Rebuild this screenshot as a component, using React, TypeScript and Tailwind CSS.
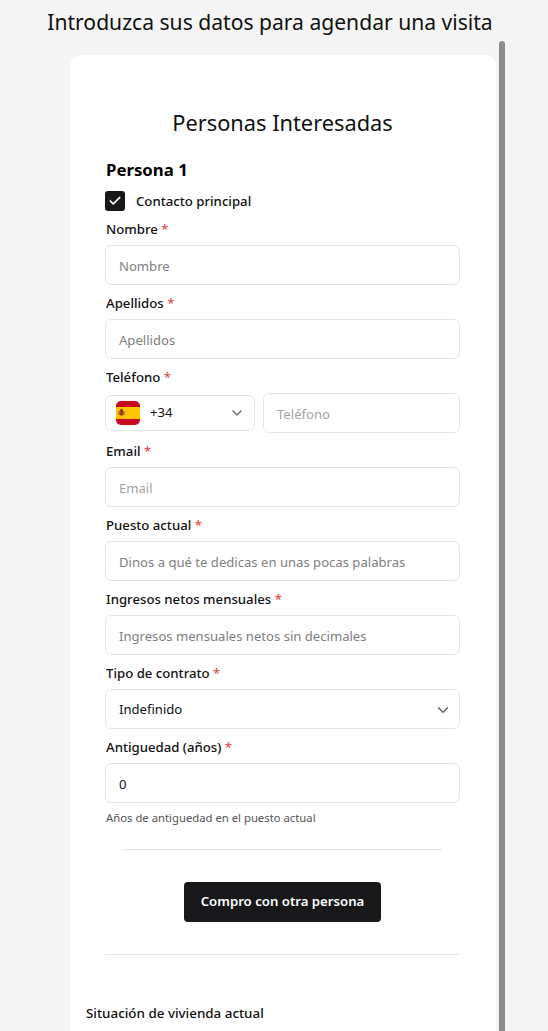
import { ChevronDown, Check } from 'lucide-react';

const fontStack = 'font-["Noto_Sans",sans-serif]';

function Label({ text }: { text: string }) {
  return (
    <label className="block h-5 pl-px text-[13.2px] leading-5 font-medium text-[#111]">
      {text} <span className="text-[#e5484d]">*</span>
    </label>
  );
}

function Field({ label, placeholder, light }: { label: string; placeholder: string; light?: boolean }) {
  return (
    <div className="mb-2">
      <Label text={label} />
      <input
        placeholder={placeholder}
        className={`mt-1.5 block h-10 w-full rounded-md border border-[#e5e5e5] bg-white px-[13px] pt-[2px] text-[13.1px] outline-none ${
          light ? 'placeholder:text-[#a3a3a3]' : 'placeholder:text-[#808080]'
        }`}
      />
    </div>
  );
}

function SpainFlag() {
  return (
    <svg width="24" height="24" viewBox="0 0 24 24" className="shrink-0">
      <rect width="24" height="24" rx="5" fill="#c60b1e" />
      <rect y="6" width="24" height="12" fill="#ffc400" />
      <rect x="3.5" y="9.5" width="4" height="5" rx="1" fill="#a3372a" />
      <circle cx="5.5" cy="9" r="1.2" fill="#7a2a1c" />
      <rect x="2.5" y="10" width="1" height="4" fill="#8a6a3a" />
      <rect x="7.5" y="10" width="1" height="4" fill="#8a6a3a" />
    </svg>
  );
}

export default function App() {
  return (
    <div className={`h-screen overflow-hidden bg-[#f5f5f5] ${fontStack}`}>
      <h1 className="h-[41px] pt-[3px] pr-2 text-center text-[21.1px] leading-[38px] text-[#111]">
        Introduzca sus datos para agendar una visita
      </h1>
      <div className="flex items-start pl-[70px]">
        <div className="mt-3.5 w-[426px] rounded-t-xl bg-white px-4 pt-[52px]">
          <div className="mr-1 ml-[3px] px-4">
            <h2 className="text-center text-[21.8px] leading-8 text-[#111]">Personas Interesadas</h2>
            <h3 className="mt-[19px] pl-px text-[16.8px] leading-6 font-bold text-black">Persona 1</h3>
            <div className="mt-[9px] flex h-5 items-center gap-[11px]">
              <span className="flex size-5 items-center justify-center rounded-[3px] bg-[#18181b]">
                <Check size={14} strokeWidth={3} className="text-white" />
              </span>
              <span className="pt-px text-[13.2px] font-medium text-[#111]">Contacto principal</span>
            </div>
            <div className="mt-2">
              <Field label="Nombre" placeholder="Nombre" />
              <Field label="Apellidos" placeholder="Apellidos" />
              <div className="mb-2">
                <Label text="Teléfono" />
                <div className="mt-1.5 flex h-10 items-center gap-2">
                  <div className="flex h-9 w-[150px] items-center rounded-md border border-[#e5e5e5] pr-[9px] pl-[10px]">
                    <SpainFlag />
                    <span className="ml-[10px] text-[13.1px] text-[#111]">+34</span>
                    <ChevronDown size={16} className="ml-auto text-[#666]" />
                  </div>
                  <input
                    placeholder="Teléfono"
                    className="h-10 min-w-0 flex-1 rounded-md border border-[#e5e5e5] px-[13px] pt-[2px] text-[13.1px] placeholder:text-[#a3a3a3] outline-none"
                  />
                </div>
              </div>
              <Field label="Email" placeholder="Email" light />
              <Field label="Puesto actual" placeholder="Dinos a qué te dedicas en unas pocas palabras" />
              <Field label="Ingresos netos mensuales" placeholder="Ingresos mensuales netos sin decimales" />
              <div className="mb-2">
                <Label text="Tipo de contrato" />
                <div className="mt-1.5 flex h-10 items-center justify-between rounded-md border border-[#e5e5e5] pt-[2px] pr-[7px] pl-[13px] text-[13.1px] text-[#111]">
                  Indefinido
                  <ChevronDown size={18} className="text-[#666]" />
                </div>
              </div>
              <div>
                <Label text="Antiguedad (años)" />
                <div className="mt-1.5 flex h-10 items-center rounded-md border border-[#e5e5e5] px-[13px] pt-[3px] text-[13.1px] text-[#111]">
                  0
                </div>
                <p className="mt-[5px] pl-px text-[11.3px] leading-[20px] text-[#555]">Años de antiguedad en el puesto actual</p>
              </div>
            </div>
            <div className="mx-[18px] mt-[21px] border-t border-[#e5e5e5]" />
            <div className="mt-8 flex justify-center">
              <button className="h-10 w-[197px] rounded bg-[#18181b] text-[13.2px] font-semibold text-white">
                Compro con otra persona
              </button>
            </div>
            <div className="mt-8 border-t border-[#e5e5e5]" />
          </div>
          <p className="mt-[48px] text-[13.4px] leading-5 font-medium text-[#111]">Situación de vivienda actual</p>
          <div className="h-10" />
        </div>
        <div className="ml-[3px] h-[990px] w-[6px] rounded-t-full bg-[#8c8c8c]" />
      </div>
    </div>
  );
}
